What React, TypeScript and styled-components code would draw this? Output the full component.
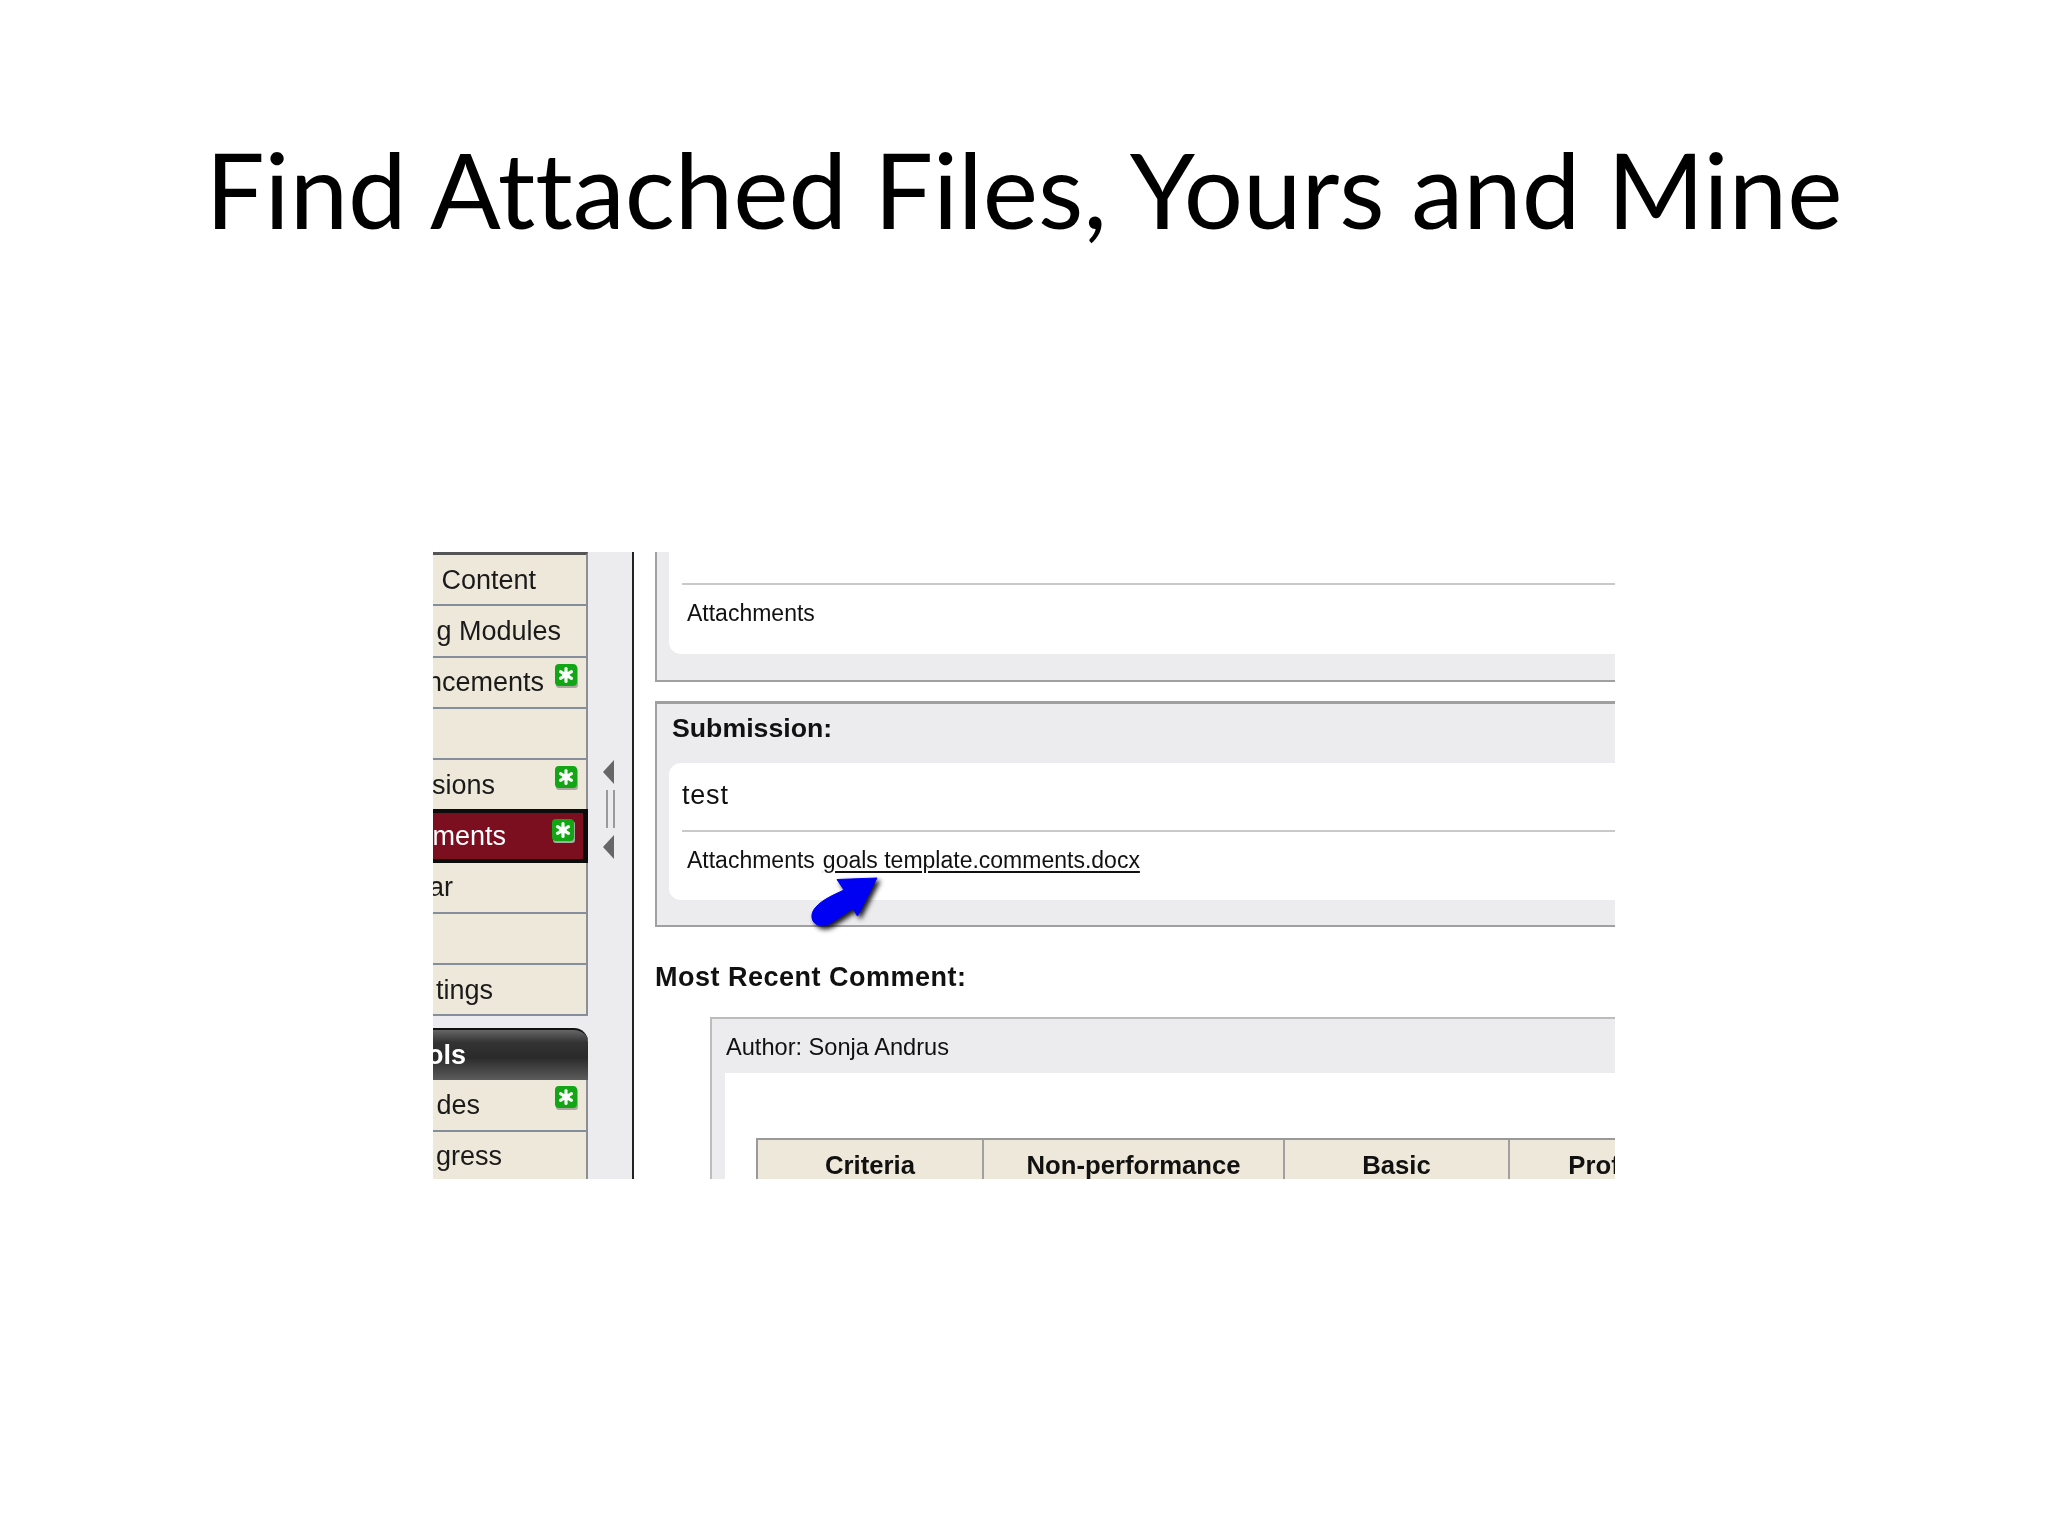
import styled, { createGlobalStyle } from "styled-components";

const GlobalStyle = createGlobalStyle`
  html, body {
    margin: 0;
    padding: 0;
    background: #fff;
  }
`;

const CREAM = "#eee8da";
const PANEL_GRAY = "#ecebee";

type MenuEntry = {
  label: string;
  end: number;
  badge?: boolean;
  active?: boolean;
};

const topMenu: MenuEntry[] = [
  { label: "Content", end: 50 },
  { label: "g Modules", end: 25 },
  { label: "ncements", end: 42, badge: true },
  { label: "", end: 0 },
  { label: "sions", end: 91, badge: true },
  { label: "ments", end: 77, badge: true, active: true },
  { label: "ar", end: 133 },
  { label: "", end: 0 },
  { label: "tings", end: 93 },
];

const toolsMenu: MenuEntry[] = [
  { label: "des", end: 106, badge: true },
  { label: "gress", end: 84 },
];

function NewBadge() {
  return (
    <BadgeIcon viewBox="0 0 23 24" aria-hidden="true">
      <rect x="1" y="2" width="22" height="22" rx="3" fill="#a9a9a0" />
      <rect x="0" y="0" width="22" height="22" rx="4" fill="#12a515" />
      <g stroke="#f2fff2" strokeWidth="3.2" strokeLinecap="round">
        <path d="M11 4.500v13" />
        <path d="M5.500 7.700l11 6.600" />
        <path d="M16.500 7.700l-11 6.600" />
      </g>
      <circle cx="11" cy="11" r="3.600" fill="#fff" />
    </BadgeIcon>
  );
}

function MenuRow({ entry }: { entry: MenuEntry }) {
  return (
    <Row $active={entry.active}>
      <RowLabel $end={entry.end}>{entry.label}</RowLabel>
      {entry.badge && <NewBadge />}
    </Row>
  );
}

function App() {
  return (
    <Page>
      <GlobalStyle />
      <Title>Find Attached Files, Yours and Mine</Title>
      <Frame>
        <Sidebar>
          <Menu>
            {topMenu.map((entry, i) => (
              <MenuRow key={i} entry={entry} />
            ))}
          </Menu>
          <ToolsHeader>ols</ToolsHeader>
          <ToolsMenu>
            {toolsMenu.map((entry, i) => (
              <MenuRow key={i} entry={entry} />
            ))}
          </ToolsMenu>
        </Sidebar>
        <Gutter>
          <svg width="16" height="100" viewBox="0 0 16 100" aria-hidden="true">
            <path d="M12 0v24L1 12z" fill="#666" />
            <path d="M5 30v38M12 30v38" stroke="#9a9a9a" strokeWidth="2" fill="none" />
            <path d="M12 75v24L1 87z" fill="#666" />
          </svg>
        </Gutter>
        <Main>
          <FirstPanel>
            <FirstBody>
              <BodyRule />
              <AttachmentRow>Attachments</AttachmentRow>
            </FirstBody>
          </FirstPanel>
          <SubmissionPanel>
            <PanelHeading>Submission:</PanelHeading>
            <SubmissionBody>
              <TestRow>test</TestRow>
              <BodyRule />
              <AttachmentRow>
                Attachments <FileLink href="#">goals template.comments.docx</FileLink>
              </AttachmentRow>
            </SubmissionBody>
          </SubmissionPanel>
          <CommentHeading>Most Recent Comment:</CommentHeading>
          <CommentBox>
            <CommentAuthor>Author: Sonja Andrus</CommentAuthor>
            <CommentBody>
              <RubricHead>
                <RubricCell>Criteria</RubricCell>
                <RubricCell>Non-performance</RubricCell>
                <RubricCell>Basic</RubricCell>
                <RubricCell>Prof</RubricCell>
              </RubricHead>
            </CommentBody>
          </CommentBox>
        </Main>
        <Arrow viewBox="0 0 80 65" aria-hidden="true">
          <path
            d="M72 6L32 7.500 39 18 C28 23 17 28 11 35 C5 41 6 49 11 52 C15 55 21 54 26 51 C34 46 41 41 48 36.500 L52.500 44z"
            fill="#0000f2"
            stroke="#0000f2"
            strokeWidth="1"
            strokeLinejoin="round"
          />
        </Arrow>
      </Frame>
    </Page>
  );
}

const Page = styled.div`
  width: 2048px;
  height: 1536px;
  overflow: hidden;
  background: #fff;
`;

const Title = styled.h1`
  margin: 0;
  height: 552px;
  padding-top: 117px;
  box-sizing: border-box;
  font-family: Lato, "Open Sans", sans-serif;
  font-size: 104.7px;
  font-weight: 400;
  font-variant-ligatures: none;
  line-height: 144px;
  text-align: center;
  color: #000;
`;

const Frame = styled.div`
  position: relative;
  display: flex;
  width: 1182px;
  height: 627px;
  margin-left: 433px;
  overflow: hidden;
  font-family: "Liberation Sans", Arial, sans-serif;
  color: #111;
  filter: blur(0.45px);
`;

const Sidebar = styled.div`
  flex: 0 0 155px;
  width: 155px;
  min-width: 0;
  display: flex;
  flex-direction: column;
  overflow: hidden;
  background: ${PANEL_GRAY};
`;

const Menu = styled.div`
  flex: none;
  border-top: 3px solid #555;
  border-right: 2px solid #8b8e94;
`;

const ToolsMenu = styled.div`
  flex: none;
  border-right: 2px solid #8b8e94;
`;

const Row = styled.div<{ $active?: boolean }>`
  position: relative;
  display: flex;
  box-sizing: border-box;
  height: 51.25px;
  padding-top: 1px;
  font-size: 27px;
  background: ${(p) => (p.$active ? "#7c0f1f" : CREAM)};
  color: ${(p) => (p.$active ? "#fff" : "#1a1a1a")};
  border-bottom: 2px solid #858e9c;

  ${(p) =>
    p.$active &&
    `
    margin-top: -2px;
    height: 53.25px;
    margin-right: -2px;
    border: 4px solid #0c0c0c;
    border-left: 0;
    border-right-width: 5px;
  `}
`;

const RowLabel = styled.div<{ $end: number }>`
  flex: 1;
  min-width: 0;
  display: flex;
  align-items: center;
  justify-content: flex-end;
  overflow: hidden;
  white-space: nowrap;
  padding-right: ${(p) => p.$end}px;
`;

const BadgeIcon = styled.svg`
  position: absolute;
  top: 6px;
  right: 8px;
  width: 23px;
  height: 24px;
`;

const ToolsHeader = styled.div`
  flex: none;
  display: flex;
  align-items: center;
  justify-content: flex-end;
  box-sizing: border-box;
  height: 52px;
  margin-top: 12px;
  padding: 1px 122px 0 0;
  overflow: hidden;
  border-top: 2px solid #111;
  border-top-right-radius: 14px;
  background: linear-gradient(#666 0%, #333 25%, #2a2a2a 55%, #5c5c5c 100%);
  color: #fff;
  font-size: 27px;
  font-weight: 700;
`;

const Gutter = styled.div`
  flex: 0 0 44px;
  box-sizing: border-box;
  padding: 208px 0 0 14px;
  background: ${PANEL_GRAY};
`;

const Main = styled.div`
  flex: 1;
  min-width: 0;
  display: flex;
  flex-direction: column;
  padding-left: 21px;
  border-left: 2px solid #222;
  background: #fff;
`;

const FirstPanel = styled.section`
  flex: none;
  box-sizing: border-box;
  height: 130px;
  padding: 0 0 26px 12px;
  background: ${PANEL_GRAY};
  border-left: 2px solid #a0a0a0;
  border-bottom: 2px solid #a0a0a0;
`;

const FirstBody = styled.div`
  height: 102px;
  padding: 31px 0 0 13px;
  box-sizing: border-box;
  background: #fff;
  border-bottom-left-radius: 12px;
`;

const BodyRule = styled.div`
  height: 2px;
  background: #c9c9c9;
`;

const AttachmentRow = styled.div`
  display: flex;
  align-items: center;
  gap: 8px;
  height: 56px;
  padding-left: 5px;
  font-size: 23px;
  white-space: nowrap;
`;

const FileLink = styled.a`
  color: #111;
  text-decoration: underline;
  text-decoration-thickness: 2px;
  text-underline-offset: 3px;
`;

const SubmissionPanel = styled.section`
  flex: none;
  box-sizing: border-box;
  height: 226px;
  margin-top: 19px;
  padding: 0 0 25px 12px;
  background: ${PANEL_GRAY};
  border-left: 2px solid #a0a0a0;
  border-top: 3px solid #a0a0a0;
  border-bottom: 2px solid #a0a0a0;
`;

const PanelHeading = styled.h2`
  margin: 0;
  height: 59px;
  padding-left: 3px;
  font-size: 26.7px;
  font-weight: 700;
  line-height: 48px;
`;

const SubmissionBody = styled.div`
  height: 137px;
  padding-left: 13px;
  box-sizing: border-box;
  background: #fff;
  border-radius: 12px 0 0 12px;
`;

const TestRow = styled.div`
  display: flex;
  align-items: center;
  box-sizing: border-box;
  height: 67px;
  padding-bottom: 3px;
  font-size: 27px;
  letter-spacing: 0.8px;
`;

const CommentHeading = styled.h2`
  flex: none;
  margin: 0;
  height: 90px;
  font-size: 27px;
  font-weight: 700;
  letter-spacing: 0.5px;
  line-height: 100px;
  white-space: nowrap;
`;

const CommentBox = styled.section`
  flex: 1;
  display: flex;
  flex-direction: column;
  margin-left: 55px;
  padding-left: 13px;
  background: ${PANEL_GRAY};
  border-left: 2px solid #bcbcbc;
  border-top: 2px solid #bcbcbc;
`;

const CommentAuthor = styled.div`
  flex: none;
  display: flex;
  align-items: center;
  box-sizing: border-box;
  height: 54px;
  padding: 2px 0 0 1px;
  font-size: 23.6px;
`;

const CommentBody = styled.div`
  flex: 1;
  padding: 65px 0 0 31px;
  background: #fff;
`;

const RubricHead = styled.div`
  display: grid;
  grid-template-columns: 226px 301px 225px 170px;
  height: 60px;
  background: ${CREAM};
  border-top: 2px solid #999;
  border-left: 2px solid #999;
`;

const RubricCell = styled.div`
  padding-top: 9px;
  text-align: center;
  font-size: 25.7px;
  font-weight: 700;
  line-height: 32px;
  white-space: nowrap;
  border-right: 2px solid #a0a0a0;
`;

const Arrow = styled.svg`
  position: absolute;
  left: 372px;
  top: 320px;
  width: 80px;
  height: 65px;
  filter: drop-shadow(3px 3px 2.5px rgba(0, 0, 0, 0.9));
`;

export default App;
